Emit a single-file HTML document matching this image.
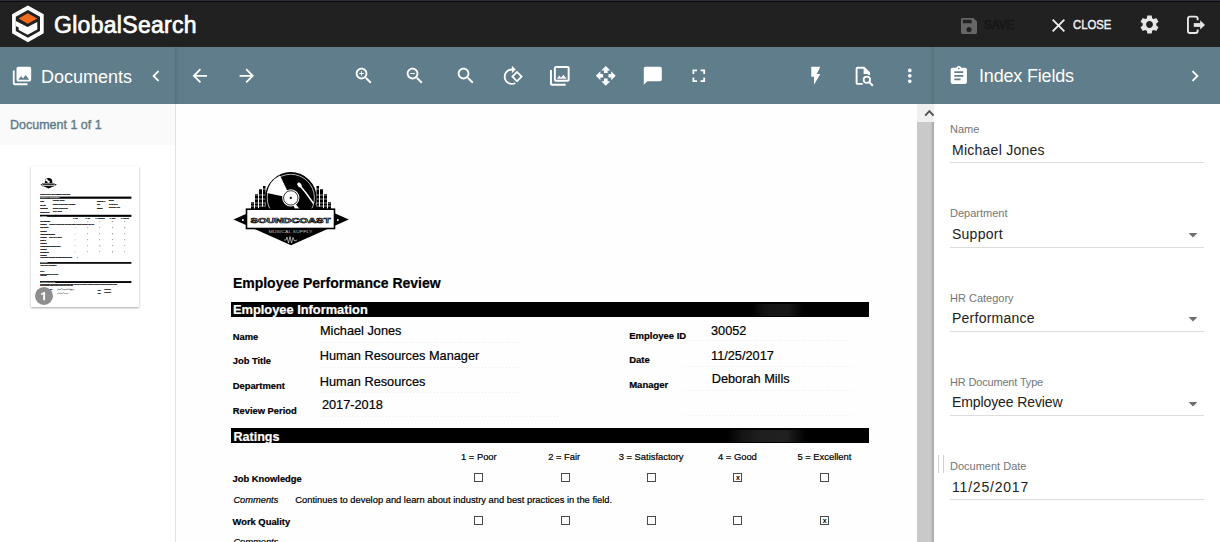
<!DOCTYPE html>
<html><head><meta charset="utf-8">
<style>
*{box-sizing:border-box;margin:0;padding:0}
html,body{width:1220px;height:542px;overflow:hidden;background:#fff;font-family:"Liberation Sans",sans-serif}
.abs{position:absolute}
#hdr{position:absolute;left:0;top:0;width:1220px;height:47px;background:#212121;border-top:1px solid #2b2b3a}
#hdr:before{content:"";position:absolute;left:0;top:0;width:1220px;height:1px;background:#0c0c0c}
#tb{position:absolute;left:0;top:47px;width:1220px;height:57px;background:#607d8b}
.wt{color:#fff;white-space:nowrap;position:absolute}
svg{position:absolute;overflow:visible}
#left{position:absolute;left:0;top:104px;width:175px;height:438px;background:#fff}
#viewer{position:absolute;left:176px;top:104px;width:741px;height:438px;background:#fefefe;overflow:hidden}
#right{position:absolute;left:934px;top:104px;width:286px;height:438px;background:#fff}
.lbl{position:absolute;left:950px;margin-top:1px;font-size:11px;color:#757575;white-space:nowrap}
.val{position:absolute;left:952px;font-size:14px;letter-spacing:0.25px;color:#212121;white-space:nowrap}
.uline{position:absolute;left:950px;width:254px;height:1px;background:#dcdcdc}
.doc{position:absolute;white-space:nowrap;color:#000;-webkit-text-stroke:0.2px currentColor}
</style></head><body>
<div id="hdr"></div>
<!-- logo -->
<svg class="abs" style="left:0;top:0" width="60" height="47" viewBox="0 0 60 47">
<polygon points="27.9,5.6 43.7,14.3 43.7,33.3 27.9,42.2 12.1,33.3 12.1,14.3" fill="#fff"/>
<polygon points="27.9,10.0 40,16.8 40,30.9 27.9,37.8 15.8,30.9 15.8,16.8" fill="#212121"/>
<polygon points="27.7,13.2 37.3,18.4 27.7,23.8 18.6,18.4" fill="#f26a1b"/>
<polygon points="15.8,21.0 27.6,27.0 37.3,22.1 37.3,29.5 27.6,34.8 18.7,29.9 18.7,27.4 15.8,25.9" fill="#fff"/>
</svg>
<div class="wt" style="left:54px;top:11.5px;font-size:23px;font-weight:normal;-webkit-text-stroke:0.7px #fff;letter-spacing:0.3px;line-height:26px">GlobalSearch</div>
<!-- save -->
<svg style="left:961px;top:18px" width="16" height="16" viewBox="3 3 18 18"><path fill="#666" d="M17 3H5c-1.11 0-2 .9-2 2v14c0 1.1.89 2 2 2h14c1.1 0 2-.9 2-2V7l-4-4zm-5 16c-1.66 0-3-1.34-3-3s1.34-3 3-3 3 1.34 3 3-1.34 3-3 3zm3-10H5V5h10v4z"/></svg>
<div class="wt" style="left:984px;top:18px;font-size:12.5px;font-weight:normal;-webkit-text-stroke:0.45px #161616;color:#161616;line-height:14px;transform:scaleX(0.93);transform-origin:0 0">SAVE</div>
<!-- close -->
<svg style="left:1052px;top:19px" width="13" height="13" viewBox="5 5 14 14"><path fill="#eee" d="M19 6.41L17.59 5 12 10.59 6.41 5 5 6.41 10.59 12 5 17.59 6.41 19 12 13.41 17.59 19 19 17.59 13.41 12z"/></svg>
<div class="wt" style="left:1073px;top:18px;font-size:12.5px;font-weight:normal;-webkit-text-stroke:0.45px #f0f0f0;color:#f0f0f0;line-height:14px;transform:scaleX(0.906);transform-origin:0 0">CLOSE</div>
<!-- gear -->
<svg style="left:1140.4px;top:15.4px" width="19" height="19" viewBox="2.5 2 19 20"><path fill="#e6e6e6" d="M19.14 12.94c.04-.3.06-.61.06-.94 0-.32-.02-.64-.07-.94l2.03-1.58c.18-.14.23-.41.12-.61l-1.92-3.32c-.12-.22-.37-.29-.59-.22l-2.39.96c-.5-.38-1.03-.7-1.62-.94l-.36-2.54c-.04-.24-.24-.41-.48-.41h-3.84c-.24 0-.43.17-.47.41l-.36 2.54c-.59.24-1.13.57-1.62.94l-2.39-.96c-.22-.08-.47 0-.59.22L2.74 8.87c-.12.21-.08.47.12.61l2.03 1.58c-.05.3-.09.63-.09.94s.02.64.07.94l-2.03 1.58c-.18.14-.23.41-.12.61l1.920 3.32c.12.22.37.29.59.22l2.39-.96c.5.38 1.03.7 1.62.94l.36 2.54c.05.24.24.41.48.41h3.840c.24 0 .44-.17.47-.41l.36-2.54c.59-.24 1.13-.56 1.62-.94l2.39.96c.22.08.47 0 .59-.22l1.92-3.32c.12-.22.07-.47-.12-.61l-2.01-1.58zM12 15.6c-1.98 0-3.6-1.62-3.6-3.6s1.62-3.6 3.6-3.6 3.6 1.62 3.6 3.6-1.62 3.6-3.6 3.6z"/></svg>
<!-- logout -->
<svg style="left:1186px;top:15px" width="20" height="20" viewBox="0 0 20 20">
<path d="M11.65,5.2 V3.6 Q11.65,1.65 9.7,1.65 H3.9 Q1.95,1.65 1.95,3.6 V16.1 Q1.95,18.05 3.9,18.05 H9.7 Q11.65,18.05 11.65,16.1 V14.4" fill="none" stroke="#e6e6e6" stroke-width="1.9"/>
<rect x="7.8" y="8.1" width="7" height="3.8" fill="#e6e6e6"/>
<polygon points="14.2,5.2 19,9.9 14.2,14.6" fill="#e6e6e6"/>
</svg>
<div id="tb"></div>
<div class="abs" style="left:175px;top:47px;width:5px;height:57px;background:linear-gradient(to right,rgba(0,0,0,.13) 0,rgba(0,0,0,.06) 1px,rgba(0,0,0,.02) 3px,rgba(0,0,0,0) 5px)"></div>
<div class="abs" style="left:928px;top:47px;width:6px;height:57px;background:linear-gradient(to left,rgba(0,0,0,.14) 0,rgba(0,0,0,.07) 1px,rgba(0,0,0,.025) 3px,rgba(0,0,0,0) 6px)"></div>
<!-- Documents header -->
<svg style="left:11px;top:65px" width="22" height="22" viewBox="0 0 24 24"><path fill="#fff" d="M22 16V4c0-1.1-.9-2-2-2H8c-1.1 0-2 .9-2 2v12c0 1.1.9 2 2 2h12c1.1 0 2-.9 2-2zm-11-4l2.03 2.71L16 11l4 5H8l3-4zM2 6v14c0 1.1.9 2 2 2h14v-2H4V6H2z"/></svg>
<div class="wt" style="left:41px;top:66.5px;font-size:18px;line-height:21px">Documents</div>
<svg style="left:145px;top:65px" width="22" height="22" viewBox="0 0 24 24"><path fill="#fff" d="M15.41 7.41L14 6l-6 6 6 6 1.41-1.41L10.83 12z"/></svg>
<!-- toolbar icons -->
<svg style="left:189px;top:65px" width="21.6" height="21.6" viewBox="0 0 24 24"><path fill="#fff" d="M20 11H7.83l5.59-5.59L12 4l-8 8 8 8 1.41-1.41L7.83 13H20v-2z"/></svg>
<svg style="left:235.5px;top:65px" width="21.6" height="21.6" viewBox="0 0 24 24"><path fill="#fff" d="M12 4l-1.41 1.41L16.17 11H4v2h12.17l-5.58 5.59L12 20l8-8z"/></svg>
<svg style="left:353px;top:65px" width="21.6" height="21.6" viewBox="0 0 24 24"><path fill="#fff" d="M15.5 14h-.79l-.28-.27C15.41 12.59 16 11.110 16 9.5 16 5.91 13.09 3 9.5 3S3 5.91 3 9.5 5.91 16 9.5 16c1.61 0 3.09-.59 4.23-1.57l.27.28v.79l5 4.99L20.49 19l-4.99-5zm-6 0C7.01 14 5 11.99 5 9.5S7.01 5 9.5 5 14 7.010 14 9.5 11.99 14 9.5 14zm2.5-4h-2v2H9v-2H7V9h2V7h1v2h2v1z"/></svg>
<svg style="left:404px;top:65px" width="21.6" height="21.6" viewBox="0 0 24 24"><path fill="#fff" d="M15.5 14h-.79l-.28-.27C15.41 12.59 16 11.11 16 9.5 16 5.91 13.09 3 9.5 3S3 5.91 3 9.5 5.91 16 9.5 16c1.61 0 3.09-.59 4.23-1.57l.27.28v.79l5 4.99L20.49 19l-4.99-5zm-6 0C7.01 14 5 11.99 5 9.5S7.01 5 9.5 5 14 7.01 14 9.5 11.99 14 9.5 14zM7 9h5v1H7z"/></svg>
<svg style="left:455px;top:65px" width="21.6" height="21.6" viewBox="0 0 24 24"><path fill="#fff" d="M15.5 14h-.79l-.28-.27C15.41 12.59 16 11.11 16 9.5 16 5.91 13.09 3 9.5 3S3 5.91 3 9.5 5.91 16 9.5 16c1.61 0 3.09-.59 4.23-1.57l.27.28v.79l5 4.99L20.49 19l-4.99-5zm-6 0C7.01 14 5 11.99 5 9.5S7.01 5 9.5 5 14 7.01 14 9.5 11.99 14 9.5 14z"/></svg>
<svg style="left:502px;top:65px" width="21.6" height="21.6" viewBox="0 0 24 24"><g transform="translate(24,0) scale(-1,1)"><path fill="#fff" d="M7.34 6.41L.86 12.9l6.49 6.48 6.49-6.48-6.5-6.49zM3.69 12.9l3.66-3.66L11 12.9l-3.66 3.66-3.65-3.66zm15.67-6.26C17.61 4.88 15.3 4 13 4V.76L8.76 5 13 9.24V6c1.79 0 3.58.68 4.95 2.05 2.73 2.73 2.73 7.17 0 9.9C16.58 19.32 14.79 20 13 20c-.97 0-1.94-.21-2.84-.61l-1.49 1.49C10.02 21.62 11.51 22 13 22c2.3 0 4.61-.88 6.36-2.64 3.52-3.51 3.52-9.21 0-12.72z"/></g></svg>
<svg style="left:548px;top:64px" width="23.6" height="23.6" viewBox="0 0 24 24"><path fill="#fff" d="M20 4v12H8V4h12m0-2H8c-1.1 0-2 .9-2 2v12c0 1.1.9 2 2 2h12c1.1 0 2-.9 2-2V4c0-1.1-.9-2-2-2zm-8.5 9.67l1.69 2.26 2.48-3.1L19 15H9zM2 6v14c0 1.1.9 2 2 2h14v-2H4V6H2z"/></svg>
<svg style="left:595px;top:65px" width="21.6" height="21.6" viewBox="0 0 24 24"><path fill="#fff" d="M10 9h4V6h3l-5-5-5 5h3v3zm-1 1H6V7l-5 5 5 5v-3h3v-4zm14 2l-5-5v3h-3v4h3v3l5-5zm-9 3h-4v3H7l5 5 5-5h-3v-3z"/></svg>
<svg style="left:642px;top:65px" width="21.6" height="21.6" viewBox="0 0 24 24"><path fill="#fff" d="M20 2H4c-1.1 0-2 .9-2 2v18l4-4h14c1.1 0 2-.9 2-2V4c0-1.1-.9-2-2-2z"/></svg>
<svg style="left:688px;top:65px" width="21.6" height="21.6" viewBox="0 0 24 24"><path fill="#fff" d="M7 14H5v5h5v-2H7v-3zm-2-4h2V7h3V5H5v5zm12 7h-3v2h5v-5h-2v3zM14 5v2h3v3h2V5h-5z"/></svg>
<svg style="left:805px;top:65px" width="21.6" height="21.6" viewBox="0 0 24 24"><path fill="#fff" d="M7 2v11h3v9l7-12h-4l4-8z"/></svg>
<svg style="left:850px;top:62px" width="28" height="28" viewBox="850 62 28 28"><path d="M862.7,83.9 H857.6 Q856.6,83.9 856.6,82.9 V68.8 Q856.6,67.8 857.6,67.8 H864.2 L869.1,72.7 V75" fill="none" stroke="#fff" stroke-width="1.9" stroke-linejoin="round"/><path d="M863.6,67.6 L870,74 L863.6,74 Z" fill="#fff"/><circle cx="866.85" cy="79.75" r="3.2" fill="none" stroke="#fff" stroke-width="1.8"/><path d="M869,81.9 L872.8,85.7" stroke="#fff" stroke-width="2"/></svg>
<svg style="left:899px;top:65px" width="21.6" height="21.6" viewBox="0 0 24 24"><path fill="#fff" d="M12 8c1.1 0 2-.9 2-2s-.9-2-2-2-2 .9-2 2 .9 2 2 2zm0 2c-1.1 0-2 .9-2 2s.9 2 2 2 2-.9 2-2-.9-2-2-2zm0 6c-1.1 0-2 .9-2 2s.9 2 2 2 2-.9 2-2-.9-2-2-2z"/></svg>
<!-- Index fields header -->
<svg style="left:948px;top:65px" width="21.6" height="21.6" viewBox="0 0 24 24"><path fill="#fff" d="M19 3h-4.18C14.4 1.84 13.3 1 12 1c-1.3 0-2.4.84-2.82 2H5c-1.1 0-2 .9-2 2v14c0 1.1.9 2 2 2h14c1.1 0 2-.9 2-2V5c0-1.1-.9-2-2-2zm-7 0c.55 0 1 .45 1 1s-.45 1-1 1-1-.45-1-1 .45-1 1-1zm2 14H7v-2h7v2zm3-4H7v-2h10v2zm0-4H7V7h10v2z"/></svg>
<div class="wt" style="left:979px;top:66px;font-size:18px;line-height:21px;letter-spacing:-0.18px">Index Fields</div>
<svg style="left:1184px;top:65px" width="22" height="22" viewBox="0 0 24 24"><path fill="#fff" d="M10 6L8.59 7.41 13.17 12l-4.58 4.59L10 18l6-6z"/></svg>
<div id="left"></div>
<div class="abs" style="left:0;top:104px;width:175px;height:41px;background:#fafafa"></div>
<div class="abs" style="left:10px;top:118px;font-size:12.5px;font-weight:normal;-webkit-text-stroke:0.4px #607d8b;color:#607d8b;white-space:nowrap;line-height:14px">Document 1 of 1</div>
<div class="abs" style="left:175px;top:104px;width:7px;height:438px;background:linear-gradient(to right,#dedede 0,#e6e6e6 1px,#f0f0f0 2.5px,#f8f8f8 4px,#fefefe 7px)"></div>
<div id="thumb" class="abs" style="left:31px;top:166px;width:108px;height:141px;background:#fff;box-shadow:0 1px 2px rgba(0,0,0,.35)"></div>
<svg style="left:31px;top:166px" width="108" height="141" viewBox="168 88.6 754 984" font-family="Liberation Sans" stroke-width="1.1">
<rect x="168" y="88.6" width="754" height="984" fill="#fff"/>
<polygon points="233.5,219.6 291,194 348.8,219.6 291,245.2" fill="#000"/><circle cx="290.8" cy="197.9" r="25.8" fill="#000"/><path d="M290.8,197.9 L280,175.6 A24,24 0 0 0 267,193 Z" fill="#fff"/><circle cx="290.8" cy="197.9" r="8.6" fill="#fff"/><rect x="246.5" y="209.2" width="88" height="19.3" fill="#fff" stroke="#000" stroke-width="2"/><rect x="252" y="214" width="78" height="9" fill="#333"/>
<text x="232.9" y="287.6" font-size="14" font-weight="bold" font-style="normal" fill="#000" stroke="#000">Employee Performance Review</text>
<rect x="231" y="302" width="638" height="15" fill="#000"/>
<text x="232.9" y="315" font-size="12.85" font-weight="bold" font-style="normal" fill="#fff">Employee Information</text>
<text x="232.7" y="339.7" font-size="9.4" font-weight="bold" font-style="normal" fill="#000" stroke="#000">Name</text>
<text x="232.7" y="364.3" font-size="9.4" font-weight="bold" font-style="normal" fill="#000" stroke="#000">Job Title</text>
<text x="232.7" y="389.2" font-size="9.4" font-weight="bold" font-style="normal" fill="#000" stroke="#000">Department</text>
<text x="232.7" y="413.7" font-size="9.4" font-weight="bold" font-style="normal" fill="#000" stroke="#000">Review Period</text>
<text x="629.2" y="339.2" font-size="9.5" font-weight="bold" font-style="normal" fill="#000" stroke="#000">Employee ID</text>
<text x="629.2" y="363.2" font-size="9.5" font-weight="bold" font-style="normal" fill="#000" stroke="#000">Date</text>
<text x="629.2" y="388.1" font-size="9.5" font-weight="bold" font-style="normal" fill="#000" stroke="#000">Manager</text>
<text x="320" y="334.8" font-size="12.75" font-weight="normal" font-style="normal" fill="#000" stroke="#000">Michael Jones</text>
<text x="319.8" y="360.2" font-size="12.75" font-weight="normal" font-style="normal" fill="#000" stroke="#000">Human Resources Manager</text>
<text x="319.8" y="386" font-size="12.75" font-weight="normal" font-style="normal" fill="#000" stroke="#000">Human Resources</text>
<text x="321.9" y="409.5" font-size="12.75" font-weight="normal" font-style="normal" fill="#000" stroke="#000">2017-2018</text>
<text x="711" y="335.5" font-size="12.75" font-weight="normal" font-style="normal" fill="#000" stroke="#000">30052</text>
<text x="711" y="360.1" font-size="12.75" font-weight="normal" font-style="normal" fill="#000" stroke="#000">11/25/2017</text>
<text x="711.7" y="383.5" font-size="12.75" font-weight="normal" font-style="normal" fill="#000" stroke="#000">Deborah Mills</text>
<rect x="231" y="429" width="638" height="14.5" fill="#000"/>
<text x="233.5" y="441.3" font-size="12.55" font-weight="bold" font-style="normal" fill="#fff">Ratings</text>
<text x="461" y="460.2" font-size="9.4" font-weight="normal" font-style="normal" fill="#000" stroke="#000">1 = Poor</text>
<text x="548.2" y="460.2" font-size="9.4" font-weight="normal" font-style="normal" fill="#000" stroke="#000">2 = Fair</text>
<text x="618.7" y="460.2" font-size="9.4" font-weight="normal" font-style="normal" fill="#000" stroke="#000">3 = Satisfactory</text>
<text x="718" y="460.2" font-size="9.4" font-weight="normal" font-style="normal" fill="#000" stroke="#000">4 = Good</text>
<text x="797.4" y="460.2" font-size="9.4" font-weight="normal" font-style="normal" fill="#000" stroke="#000">5 = Excellent</text>
<text x="232.5" y="481.9" font-size="9.4" font-weight="bold" font-style="normal" fill="#000" stroke="#000">Job Knowledge</text>
<rect x="474.1" y="473.2" width="9" height="9" fill="none" stroke="#aaa" stroke-width="1"/>
<rect x="560.7" y="473.2" width="9" height="9" fill="none" stroke="#aaa" stroke-width="1"/>
<rect x="647.0" y="473.2" width="9" height="9" fill="none" stroke="#aaa" stroke-width="1"/>
<rect x="733.0" y="473.2" width="9" height="9" fill="none" stroke="#aaa" stroke-width="1"/>
<rect x="735.5" y="475.7" width="4" height="4" fill="#777"/>
<rect x="819.8" y="473.2" width="9" height="9" fill="none" stroke="#aaa" stroke-width="1"/>
<text x="233.4" y="503.59999999999997" font-size="9.3" font-weight="normal" font-style="italic" fill="#000" stroke="#000">Comments</text>
<text x="295.3" y="503.59999999999997" font-size="9.36" font-weight="normal" font-style="normal" fill="#000" stroke="#000">Continues to develop and learn about industry and best practices in the field.</text>
<text x="232.5" y="524.5" font-size="9.4" font-weight="bold" font-style="normal" fill="#000" stroke="#000">Work Quality</text>
<rect x="474.1" y="515.8" width="9" height="9" fill="none" stroke="#aaa" stroke-width="1"/>
<rect x="560.7" y="515.8" width="9" height="9" fill="none" stroke="#aaa" stroke-width="1"/>
<rect x="647.0" y="515.8" width="9" height="9" fill="none" stroke="#aaa" stroke-width="1"/>
<rect x="733.0" y="515.8" width="9" height="9" fill="none" stroke="#aaa" stroke-width="1"/>
<rect x="819.8" y="515.8" width="9" height="9" fill="none" stroke="#aaa" stroke-width="1"/>
<rect x="822.3" y="518.3" width="4" height="4" fill="#777"/>
<text x="233.4" y="546.2" font-size="9.3" font-weight="normal" font-style="italic" fill="#000" stroke="#000">Comments</text>
<text x="232.5" y="567.1" font-size="9.4" font-weight="bold" font-style="normal" fill="#000" stroke="#000">Attendance/Punctuality</text>
<rect x="474.1" y="558.4" width="9" height="9" fill="none" stroke="#aaa" stroke-width="1"/>
<rect x="560.7" y="558.4" width="9" height="9" fill="none" stroke="#aaa" stroke-width="1"/>
<rect x="647.0" y="558.4" width="9" height="9" fill="none" stroke="#aaa" stroke-width="1"/>
<rect x="733.0" y="558.4" width="9" height="9" fill="none" stroke="#aaa" stroke-width="1"/>
<rect x="735.5" y="560.9" width="4" height="4" fill="#777"/>
<rect x="819.8" y="558.4" width="9" height="9" fill="none" stroke="#aaa" stroke-width="1"/>
<text x="233.4" y="588.8000000000001" font-size="9.3" font-weight="normal" font-style="italic" fill="#000" stroke="#000">Comments</text>
<text x="295.3" y="588.8000000000001" font-size="9.36" font-weight="normal" font-style="normal" fill="#000" stroke="#000">Rarely late or absent.</text>
<text x="232.5" y="609.7" font-size="9.4" font-weight="bold" font-style="normal" fill="#000" stroke="#000">Initiative</text>
<rect x="474.1" y="601.0" width="9" height="9" fill="none" stroke="#aaa" stroke-width="1"/>
<rect x="560.7" y="601.0" width="9" height="9" fill="none" stroke="#aaa" stroke-width="1"/>
<rect x="647.0" y="601.0" width="9" height="9" fill="none" stroke="#aaa" stroke-width="1"/>
<rect x="733.0" y="601.0" width="9" height="9" fill="none" stroke="#aaa" stroke-width="1"/>
<rect x="819.8" y="601.0" width="9" height="9" fill="none" stroke="#aaa" stroke-width="1"/>
<rect x="822.3" y="603.5" width="4" height="4" fill="#777"/>
<text x="233.4" y="631.4000000000001" font-size="9.3" font-weight="normal" font-style="italic" fill="#000" stroke="#000">Comments</text>
<text x="232.5" y="652.3000000000001" font-size="9.4" font-weight="bold" font-style="normal" fill="#000" stroke="#000">Communication/Listening Skills</text>
<rect x="474.1" y="643.6" width="9" height="9" fill="none" stroke="#aaa" stroke-width="1"/>
<rect x="560.7" y="643.6" width="9" height="9" fill="none" stroke="#aaa" stroke-width="1"/>
<rect x="647.0" y="643.6" width="9" height="9" fill="none" stroke="#aaa" stroke-width="1"/>
<rect x="649.5" y="646.1" width="4" height="4" fill="#777"/>
<rect x="733.0" y="643.6" width="9" height="9" fill="none" stroke="#aaa" stroke-width="1"/>
<rect x="819.8" y="643.6" width="9" height="9" fill="none" stroke="#aaa" stroke-width="1"/>
<text x="233.4" y="674.0000000000001" font-size="9.3" font-weight="normal" font-style="italic" fill="#000" stroke="#000">Comments</text>
<text x="232.5" y="694.9000000000001" font-size="9.4" font-weight="bold" font-style="normal" fill="#000" stroke="#000">Dependability</text>
<rect x="474.1" y="686.2" width="9" height="9" fill="none" stroke="#aaa" stroke-width="1"/>
<rect x="560.7" y="686.2" width="9" height="9" fill="none" stroke="#aaa" stroke-width="1"/>
<rect x="647.0" y="686.2" width="9" height="9" fill="none" stroke="#aaa" stroke-width="1"/>
<rect x="733.0" y="686.2" width="9" height="9" fill="none" stroke="#aaa" stroke-width="1"/>
<rect x="735.5" y="688.7" width="4" height="4" fill="#777"/>
<rect x="819.8" y="686.2" width="9" height="9" fill="none" stroke="#aaa" stroke-width="1"/>
<text x="233.4" y="716.6000000000001" font-size="9.3" font-weight="normal" font-style="italic" fill="#000" stroke="#000">Comments</text>
<text x="232.5" y="734" font-size="9.4" font-weight="bold" font-style="normal" fill="#000" stroke="#000">Overall Rating (average the rating numbers above)</text>
<rect x="489.5" y="725.3" width="9" height="9" fill="none" stroke="#aaa" stroke-width="1"/><rect x="492" y="727.8" width="4" height="4" fill="#777"/>
<rect x="231" y="759" width="638" height="12" fill="#000"/>
<text x="233" y="769" font-size="10" font-weight="bold" font-style="normal" fill="#fff">Evaluation</text>
<text x="233" y="784" font-size="9.4" font-weight="normal" font-style="normal" fill="#000" stroke="#000">ADDITIONAL COMMENTS</text>
<text x="233" y="831" font-size="8" font-weight="normal" font-style="normal" fill="#000" stroke="#000">GOALS</text>
<text x="233" y="848" font-size="8" font-weight="normal" font-style="normal" fill="#000" stroke="#000">Goals to be reached for next review</text>
<text x="233" y="859" font-size="8" font-weight="normal" font-style="normal" fill="#000" stroke="#000">2018 targets</text>
<rect x="231" y="892" width="638" height="13" fill="#000"/>
<text x="233" y="903" font-size="10" font-weight="bold" font-style="normal" fill="#fff">Verification of Review</text>
<text x="233" y="918" font-size="7.6" font-weight="normal" font-style="normal" fill="#000" stroke="#000">By signing this form, you confirm that you have discussed this review in detail with your supervisor. Signing this form does not necessarily indicate that you agree</text>
<text x="233" y="929" font-size="7.6" font-weight="normal" font-style="normal" fill="#000" stroke="#000">with this evaluation and that you have received a copy of the review.</text>
<text x="233" y="956" font-size="9.4" font-weight="normal" font-style="normal" fill="#000" stroke="#000">Employee Signature</text>
<path d="M350,957 C360,940 372,960 380,945 C390,950 400,955 420,950 C430,940 440,960 455,952 M440,945 C445,950 450,955 470,952" fill="none" stroke="#000" stroke-width="3"/>
<text x="233" y="980" font-size="9.4" font-weight="normal" font-style="normal" fill="#000" stroke="#000">Manager Signature</text>
<path d="M350,981 C365,970 380,982 395,975 C405,978 415,982 430,976" fill="none" stroke="#000" stroke-width="2.4"/>
<text x="634" y="958" font-size="9.4" font-weight="normal" font-style="normal" fill="#000" stroke="#000">Date</text>
<text x="680" y="953" font-size="9.4" font-weight="normal" font-style="normal" fill="#000" stroke="#000">11/25/2017</text>
<text x="634" y="982" font-size="9.4" font-weight="normal" font-style="normal" fill="#000" stroke="#000">Date</text>
<text x="680" y="977" font-size="9.4" font-weight="normal" font-style="normal" fill="#000" stroke="#000">11/25/2017</text>
</svg>
<svg style="left:35px;top:287px" width="18" height="18" viewBox="0 0 18 18"><circle cx="9" cy="8.9" r="9" fill="#8e8e8e"/><path d="M8.2,13.2 V7.3 L6,8.1 V6.6 L9.1,5.1 H10.1 V13.2 Z" fill="#fff"/></svg>
<div id="viewer"></div>
<div id="docwrap">
<div class="abs" style="left:320px;top:342px;width:200px;height:1px;background:repeating-linear-gradient(to right,rgba(0,0,0,.08) 0 1px,rgba(0,0,0,0) 1px 3px)"></div>
<div class="abs" style="left:320px;top:366.5px;width:200px;height:1px;background:repeating-linear-gradient(to right,rgba(0,0,0,.08) 0 1px,rgba(0,0,0,0) 1px 3px)"></div>
<div class="abs" style="left:320px;top:391.5px;width:200px;height:1px;background:repeating-linear-gradient(to right,rgba(0,0,0,.08) 0 1px,rgba(0,0,0,0) 1px 3px)"></div>
<div class="abs" style="left:320px;top:416px;width:240px;height:1px;background:repeating-linear-gradient(to right,rgba(0,0,0,.08) 0 1px,rgba(0,0,0,0) 1px 3px)"></div>
<div class="abs" style="left:685px;top:340px;width:168px;height:1px;background:repeating-linear-gradient(to right,rgba(0,0,0,.08) 0 1px,rgba(0,0,0,0) 1px 3px)"></div>
<div class="abs" style="left:685px;top:365.7px;width:168px;height:1px;background:repeating-linear-gradient(to right,rgba(0,0,0,.08) 0 1px,rgba(0,0,0,0) 1px 3px)"></div>
<div class="abs" style="left:685px;top:390.3px;width:168px;height:1px;background:repeating-linear-gradient(to right,rgba(0,0,0,.08) 0 1px,rgba(0,0,0,0) 1px 3px)"></div>
<div class="abs" style="left:685px;top:414.6px;width:168px;height:1px;background:repeating-linear-gradient(to right,rgba(0,0,0,.08) 0 1px,rgba(0,0,0,0) 1px 3px)"></div>
<svg style="left:228px;top:165px" width="126" height="86" viewBox="228 165 126 86">
<polygon points="233.5,219.6 291,194 348.8,219.6 291,245.2" fill="#000"/>
<g fill="#000">
<rect x="251" y="202" width="3" height="8"/><rect x="255" y="194" width="3" height="16"/><rect x="259" y="189" width="3" height="21"/><rect x="263" y="186" width="2.5" height="24"/><rect x="328" y="202" width="3" height="8"/><rect x="324" y="194" width="3" height="16"/><rect x="320" y="189" width="3" height="21"/><rect x="316.5" y="186" width="2.5" height="24"/>
</g>
<g stroke="#fff" stroke-width="0.6">
<line x1="250" y1="203" x2="266" y2="203"/><line x1="250" y1="206" x2="266" y2="206"/><line x1="252" y1="195" x2="266" y2="195"/><line x1="254" y1="189" x2="266" y2="189"/><line x1="252" y1="199" x2="266" y2="199"/>
<line x1="316" y1="203" x2="332" y2="203"/><line x1="316" y1="206" x2="332" y2="206"/><line x1="316" y1="195" x2="330" y2="195"/><line x1="316" y1="189" x2="328" y2="189"/><line x1="316" y1="199" x2="330" y2="199"/>
</g>
<circle cx="290.8" cy="197.9" r="25.8" fill="#000"/>
<circle cx="290.8" cy="197.9" r="23.6" fill="none" stroke="#fff" stroke-width="0.7"/>
<path d="M290.8,197.9 L280,175.6 A24,24 0 0 0 267,193 Z" fill="#fff"/>
<path d="M290.8,197.9 L302,212 L296,212 Z" fill="#fff"/>
<circle cx="290.8" cy="197.9" r="8.6" fill="#fff"/>
<circle cx="290.8" cy="197.9" r="7.2" fill="none" stroke="#000" stroke-width="0.8"/>
<circle cx="290.8" cy="197.9" r="1.1" fill="#000"/>
<path d="M299,184.5 L306,193 L313.5,203.5" fill="none" stroke="#fff" stroke-width="1.5"/>
<ellipse cx="299.5" cy="185" rx="1.8" ry="2.8" transform="rotate(-40 299.5 185)" fill="#fff"/>
<rect x="246.5" y="209.2" width="88" height="19.3" fill="#fff" stroke="#000" stroke-width="1.6"/>
<text x="290.5" y="223" text-anchor="middle" font-family="Liberation Sans" font-weight="bold" font-size="8" textLength="80" lengthAdjust="spacingAndGlyphs" fill="#fff" stroke="#000" stroke-width="0.7">SOUNDCOAST</text>
<text x="290.5" y="233" text-anchor="middle" font-family="Liberation Sans" font-size="3" textLength="44" lengthAdjust="spacingAndGlyphs" fill="#bbb">MUSICAL SUPPLY</text>
<path d="M284,240 L286,240 L287,237 L288.5,243 L290,236.5 L291.5,243 L293,237.5 L294.5,241 L297,240" fill="none" stroke="#fff" stroke-width="0.6"/>
<circle cx="242.9" cy="220" r="1" fill="#fff"/><circle cx="337.8" cy="220" r="1" fill="#fff"/>
</svg>
<div class="doc" style="left:232.9px;top:275.75px;font-size:14px;line-height:14px;font-weight:bold;font-style:normal;color:#000;letter-spacing:0px">Employee Performance Review</div>
<div class="abs" style="left:231px;top:302.3px;width:638px;height:14.5px;background:#000"></div>
<div class="abs" style="left:752px;top:303.5px;width:52px;height:12px;background:linear-gradient(to right,rgba(90,90,90,0) 0,rgba(90,90,90,.22) 25%,rgba(90,90,90,.25) 70%,rgba(90,90,90,0) 100%)"></div>
<div class="doc" style="left:232.9px;top:304.12px;font-size:12.85px;line-height:12.85px;font-weight:bold;font-style:normal;color:#fff;letter-spacing:0px">Employee Information</div>
<div class="abs" style="left:231px;top:428.2px;width:638px;height:14.5px;background:#000"></div>
<div class="abs" style="left:728px;top:429.5px;width:78px;height:12.5px;background:linear-gradient(to right,rgba(90,90,90,0) 0,rgba(90,90,90,.22) 18%,rgba(100,100,100,.3) 40%,rgba(100,100,100,.32) 75%,rgba(90,90,90,0) 100%)"></div>
<div class="doc" style="left:233.5px;top:430.68px;font-size:12.55px;line-height:12.55px;font-weight:bold;font-style:normal;color:#fff;letter-spacing:0px">Ratings</div>
<div class="doc" style="left:232.7px;top:331.74px;font-size:9.4px;line-height:9.4px;font-weight:bold;font-style:normal;color:#000;letter-spacing:0px">Name</div>
<div class="doc" style="left:232.7px;top:356.34px;font-size:9.4px;line-height:9.4px;font-weight:bold;font-style:normal;color:#000;letter-spacing:0px">Job Title</div>
<div class="doc" style="left:232.7px;top:381.24px;font-size:9.4px;line-height:9.4px;font-weight:bold;font-style:normal;color:#000;letter-spacing:0px">Department</div>
<div class="doc" style="left:232.7px;top:405.74px;font-size:9.4px;line-height:9.4px;font-weight:bold;font-style:normal;color:#000;letter-spacing:0px">Review Period</div>
<div class="doc" style="left:629.2px;top:331.16px;font-size:9.5px;line-height:9.5px;font-weight:bold;font-style:normal;color:#000;letter-spacing:0px">Employee ID</div>
<div class="doc" style="left:629.2px;top:355.16px;font-size:9.5px;line-height:9.5px;font-weight:bold;font-style:normal;color:#000;letter-spacing:0px">Date</div>
<div class="doc" style="left:629.2px;top:380.06px;font-size:9.5px;line-height:9.5px;font-weight:bold;font-style:normal;color:#000;letter-spacing:0px">Manager</div>
<div class="doc" style="left:320px;top:324.71px;font-size:12.75px;line-height:12.75px;font-weight:normal;font-style:normal;color:#000;letter-spacing:0px">Michael Jones</div>
<div class="doc" style="left:319.8px;top:350.11px;font-size:12.75px;line-height:12.75px;font-weight:normal;font-style:normal;color:#000;letter-spacing:0px">Human Resources Manager</div>
<div class="doc" style="left:319.8px;top:375.91px;font-size:12.75px;line-height:12.75px;font-weight:normal;font-style:normal;color:#000;letter-spacing:0px">Human Resources</div>
<div class="doc" style="left:321.9px;top:399.41px;font-size:12.75px;line-height:12.75px;font-weight:normal;font-style:normal;color:#000;letter-spacing:0px">2017-2018</div>
<div class="doc" style="left:711px;top:325.41px;font-size:12.75px;line-height:12.75px;font-weight:normal;font-style:normal;color:#000;letter-spacing:0px">30052</div>
<div class="doc" style="left:711px;top:350.01px;font-size:12.75px;line-height:12.75px;font-weight:normal;font-style:normal;color:#000;letter-spacing:0px">11/25/2017</div>
<div class="doc" style="left:711.7px;top:373.41px;font-size:12.75px;line-height:12.75px;font-weight:normal;font-style:normal;color:#000;letter-spacing:0px">Deborah Mills</div>
<div class="doc" style="left:461px;top:452.24px;font-size:9.4px;line-height:9.4px;font-weight:normal;font-style:normal;color:#000;letter-spacing:0px">1 = Poor</div>
<div class="doc" style="left:548.2px;top:452.24px;font-size:9.4px;line-height:9.4px;font-weight:normal;font-style:normal;color:#000;letter-spacing:0px">2 = Fair</div>
<div class="doc" style="left:618.7px;top:452.24px;font-size:9.4px;line-height:9.4px;font-weight:normal;font-style:normal;color:#000;letter-spacing:0px">3 = Satisfactory</div>
<div class="doc" style="left:718px;top:452.24px;font-size:9.4px;line-height:9.4px;font-weight:normal;font-style:normal;color:#000;letter-spacing:0px">4 = Good</div>
<div class="doc" style="left:797.4px;top:452.24px;font-size:9.4px;line-height:9.4px;font-weight:normal;font-style:normal;color:#000;letter-spacing:0px">5 = Excellent</div>
<div class="doc" style="left:232.5px;top:473.94px;font-size:9.4px;line-height:9.4px;font-weight:bold;font-style:normal;color:#000;letter-spacing:0px">Job Knowledge</div>
<div class="doc" style="left:233.4px;top:495.73px;font-size:9.3px;line-height:9.3px;font-weight:normal;font-style:italic;color:#000;letter-spacing:0px">Comments</div>
<div class="doc" style="left:295.3px;top:495.68px;font-size:9.36px;line-height:9.36px;font-weight:normal;font-style:normal;color:#000;letter-spacing:0px">Continues to develop and learn about industry and best practices in the field.</div>
<div class="doc" style="left:232.5px;top:516.54px;font-size:9.4px;line-height:9.4px;font-weight:bold;font-style:normal;color:#000;letter-spacing:0px">Work Quality</div>
<div class="doc" style="left:233.4px;top:537.53px;font-size:9.3px;line-height:9.3px;font-weight:normal;font-style:italic;color:#000;letter-spacing:0px">Comments</div>
<div class="abs" style="left:474.1px;top:473.2px;width:9px;height:9px;border:1px solid #4a4a4a"></div>
<div class="abs" style="left:560.7px;top:473.2px;width:9px;height:9px;border:1px solid #4a4a4a"></div>
<div class="abs" style="left:647.0px;top:473.2px;width:9px;height:9px;border:1px solid #4a4a4a"></div>
<div class="abs" style="left:733.0px;top:473.2px;width:9px;height:9px;border:1px solid #4a4a4a"></div>
<div class="abs" style="left:735.0px;top:474.2px;width:6px;font-size:7px;line-height:7px;font-weight:bold;text-align:center">x</div>
<div class="abs" style="left:819.8px;top:473.2px;width:9px;height:9px;border:1px solid #4a4a4a"></div>
<div class="abs" style="left:474.1px;top:515.8px;width:9px;height:9px;border:1px solid #4a4a4a"></div>
<div class="abs" style="left:560.7px;top:515.8px;width:9px;height:9px;border:1px solid #4a4a4a"></div>
<div class="abs" style="left:647.0px;top:515.8px;width:9px;height:9px;border:1px solid #4a4a4a"></div>
<div class="abs" style="left:733.0px;top:515.8px;width:9px;height:9px;border:1px solid #4a4a4a"></div>
<div class="abs" style="left:819.8px;top:515.8px;width:9px;height:9px;border:1px solid #4a4a4a"></div>
<div class="abs" style="left:821.8px;top:516.8px;width:6px;font-size:7px;line-height:7px;font-weight:bold;text-align:center">x</div>
</div>
<div id="right"></div>
<div class="abs" style="left:917px;top:104px;width:17px;height:438px;background:linear-gradient(to right,#c9c9c9 0,#c9c9c9 14px,#b5b5b5 15px,#a9a9a9 17px)"></div>
<div class="abs" style="left:917px;top:104px;width:17px;height:18px;background:#f0f0f0"></div>
<svg style="left:924px;top:108px" width="11" height="9" viewBox="0 0 11 9"><path d="M1.2,7.6 L5.4,3.2 L9.6,7.6" fill="none" stroke="#505050" stroke-width="1.9"/></svg>
<div class="abs" style="left:938px;top:455px;width:1px;height:18px;background:#d0d0d0"></div>
<div class="abs" style="left:943px;top:455px;width:1px;height:18px;background:#d0d0d0"></div>
<div class="lbl" style="top:122px;line-height:13px">Name</div>
<div class="val" style="top:141.5px;line-height:16px">Michael Jones</div>
<div class="uline" style="top:162px"></div>
<div class="lbl" style="top:206.3px;line-height:13px">Department</div>
<div class="val" style="top:225.8px;line-height:16px">Support</div>
<div class="uline" style="top:247px"></div>
<svg style="left:1185px;top:232px" width="16" height="7" viewBox="1185 232 16 7"><polygon points="1188.6,233 1197.4,233 1193,237.4" fill="#6e6e6e"/></svg>
<div class="lbl" style="top:290.6px;line-height:13px">HR Category</div>
<div class="val" style="top:310.1px;line-height:16px">Performance</div>
<div class="uline" style="top:331px"></div>
<svg style="left:1185px;top:316.4px" width="16" height="7" viewBox="1185 316.4 16 7"><polygon points="1188.6,317.4 1197.4,317.4 1193,321.79999999999995" fill="#6e6e6e"/></svg>
<div class="lbl" style="top:374.9px;line-height:13px;letter-spacing:-0.17px">HR Document Type</div>
<div class="val" style="top:394.4px;line-height:16px;letter-spacing:-0.1px">Employee Review</div>
<div class="uline" style="top:415px"></div>
<svg style="left:1185px;top:400.8px" width="16" height="7" viewBox="1185 400.8 16 7"><polygon points="1188.6,401.8 1197.4,401.8 1193,406.2" fill="#6e6e6e"/></svg>
<div class="lbl" style="top:459.2px;line-height:13px">Document Date</div>
<div class="val" style="top:478.7px;line-height:16px;letter-spacing:0.8px">11/25/2017</div>
<div class="uline" style="top:499px"></div>
</body></html>
